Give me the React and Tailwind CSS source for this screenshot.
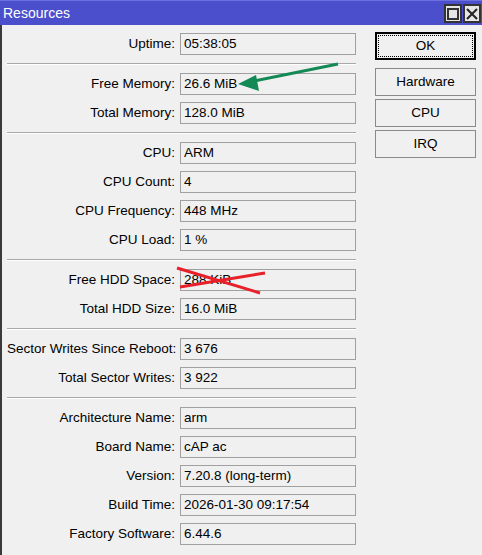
import React from "react";

const groups = [
  [["Uptime:", "05:38:05"]],
  [
    ["Free Memory:", "26.6 MiB"],
    ["Total Memory:", "128.0 MiB"],
  ],
  [
    ["CPU:", "ARM"],
    ["CPU Count:", "4"],
    ["CPU Frequency:", "448 MHz"],
    ["CPU Load:", "1 %"],
  ],
  [
    ["Free HDD Space:", "288 KiB"],
    ["Total HDD Size:", "16.0 MiB"],
  ],
  [
    ["Sector Writes Since Reboot:", "3 676"],
    ["Total Sector Writes:", "3 922"],
  ],
  [
    ["Architecture Name:", "arm"],
    ["Board Name:", "cAP ac"],
    ["Version:", "7.20.8 (long-term)"],
    ["Build Time:", "2026-01-30 09:17:54"],
    ["Factory Software:", "6.44.6"],
  ],
];

function Row({ label, value }) {
  return (
    <div className="flex items-center h-[22px]">
      <div className="w-[168px] text-right whitespace-nowrap">{label}</div>
      <div className="ml-[5px] w-[176px] h-[22px] border border-[#a0a0a0] bg-[#f0f0f0] flex items-center pl-[3px] whitespace-nowrap">
        {value}
      </div>
    </div>
  );
}

function Btn({ children, focus }) {
  return (
    <div
      className={
        "relative w-[101px] h-[28px] flex items-center justify-center bg-[#f0f0f0] " +
        (focus ? "border-2 border-black" : "border border-[#8a8a8a]")
      }
    >
      {focus && <div className="absolute inset-[1px] border border-dotted border-black" />}
      <span className="relative">{children}</span>
    </div>
  );
}

export default function App() {
  return (
    <div
      className="relative w-[482px] h-[555px] bg-[#f0f0f0] flex flex-col overflow-hidden text-[13.5px] text-black"
      style={{ fontFamily: '"Liberation Sans", Arial, sans-serif' }}
    >
      <div className="h-[25px] shrink-0 bg-[#4b4fcc] border-t border-[#6b6fe0] flex items-center justify-between">
        <span className="pl-[3px] text-white text-[14px] leading-none">Resources</span>
        <div className="flex gap-[1px] mr-[1px] pt-[1px]">
          <div className="w-[18px] h-[19px] border-2 border-[#333] bg-[#e6e6e6] flex items-center justify-center">
            <div className="w-[12px] h-[12px] border-2 border-[#333]" />
          </div>
          <div className="w-[18px] h-[19px] border-2 border-[#333] bg-[#e6e6e6] flex items-center justify-center">
            <svg width="12" height="12" viewBox="0 0 12 12">
              <path d="M1 1 L11 11 M11 1 L1 11" stroke="#222" strokeWidth="2" />
            </svg>
          </div>
        </div>
      </div>
      <div className="flex flex-1 border-l-2 border-[#3a3a3a]">
        <div className="pl-[5px] pt-[8px] flex flex-col">
          {groups.map((g, gi) => (
            <React.Fragment key={gi}>
              {gi > 0 && (
                <div className="my-[8px] w-[349px] h-[2px] border-t border-[#a8a8a8] border-b border-b-white" />
              )}
              <div className="flex flex-col gap-[7px]">
                {g.map(([l, v]) => (
                  <Row key={l} label={l} value={v} />
                ))}
              </div>
            </React.Fragment>
          ))}
        </div>
        <div className="ml-[19px] pt-[7px] flex flex-col gap-[8px]">
          <Btn focus>OK</Btn>
          <div className="flex flex-col gap-[3px]">
            <Btn>Hardware</Btn>
            <Btn>CPU</Btn>
            <Btn>IRQ</Btn>
          </div>
        </div>
      </div>
      <svg className="absolute inset-0 pointer-events-none" width="482" height="555" viewBox="0 0 482 555">
        <line x1="338" y1="64" x2="254" y2="81" stroke="#138a55" strokeWidth="3" />
        <polygon points="238,84 256,75 259,91" fill="#138a55" />
        <line x1="177" y1="268" x2="260" y2="293" stroke="#e8202a" strokeWidth="3" />
        <line x1="180" y1="287" x2="265" y2="273" stroke="#e8202a" strokeWidth="3" />
      </svg>
    </div>
  );
}
